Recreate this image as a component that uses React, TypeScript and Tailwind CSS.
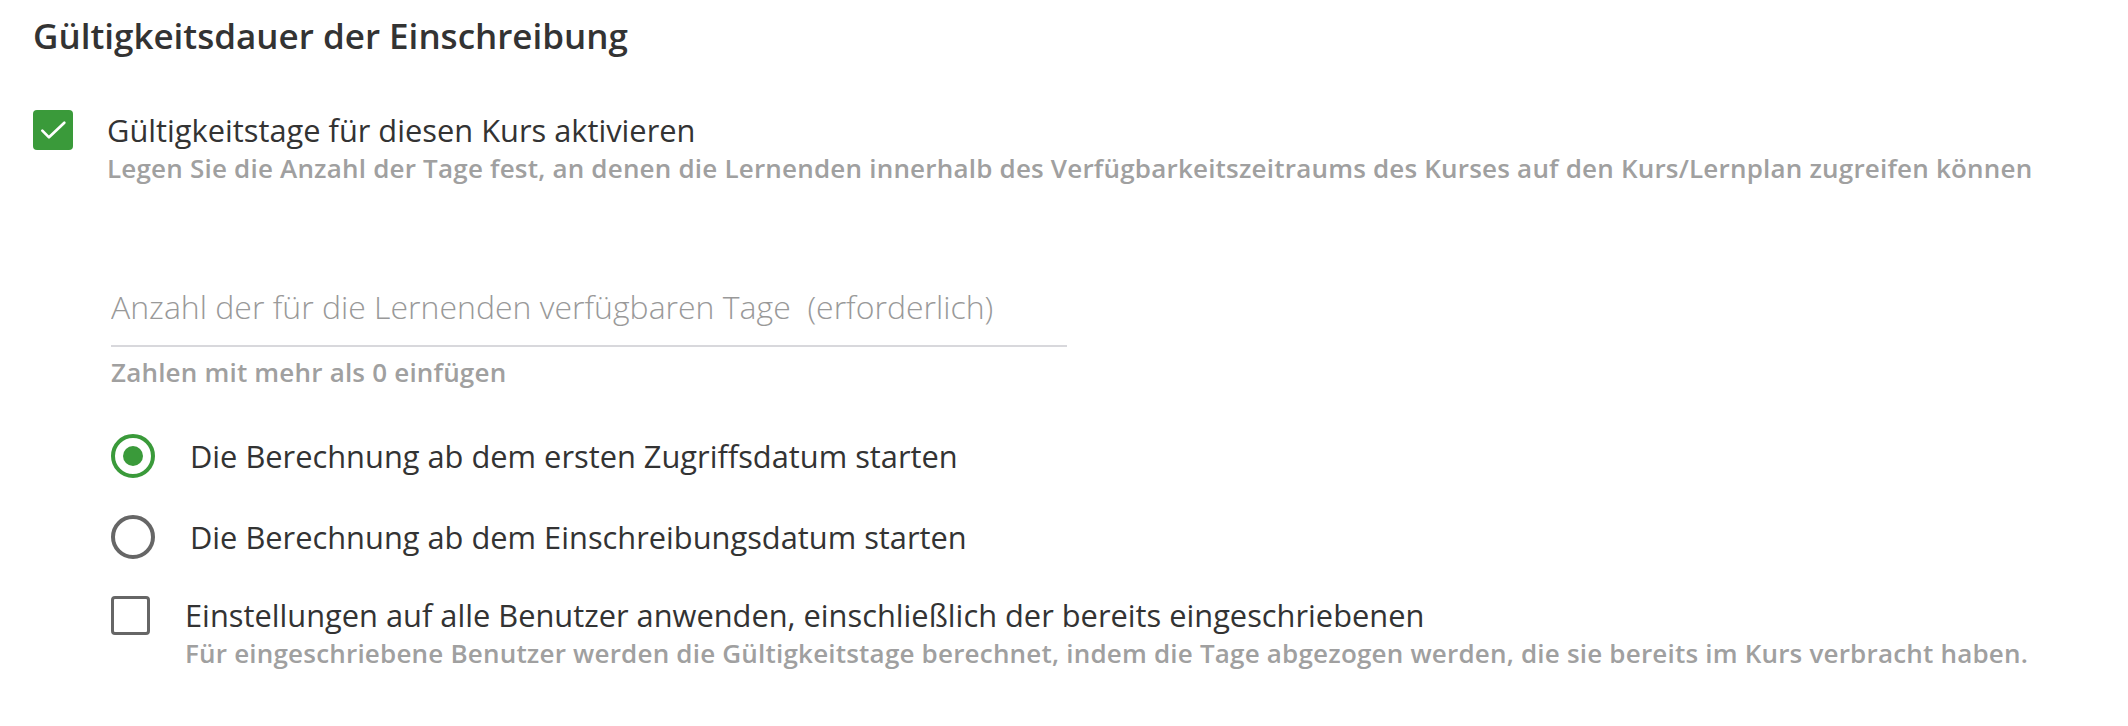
import { useState } from 'react';

const font = { fontFamily: '"Open Sans", "Noto Sans", sans-serif' };

function CheckIcon() {
  return (
    <svg viewBox="0 0 24 24" className="w-[32px] h-[32px]" fill="none" stroke="white" strokeWidth={2} strokeLinecap="round" strokeLinejoin="round">
      <path d="M4 12.5l5 5L20.5 6.5" />
    </svg>
  );
}

function Radio({ checked, label, onClick }: { checked: boolean; label: string; onClick: () => void }) {
  return (
    <button onClick={onClick} className="flex items-center gap-[35px] text-left">
      <span
        className={`w-[44px] h-[44px] rounded-full border-[4px] flex items-center justify-center ${
          checked ? 'border-[#3a9a3a]' : 'border-[#666666]'
        }`}
      >
        {checked && <span className="w-[20px] h-[20px] rounded-full bg-[#3a9a3a]" />}
      </span>
      <span className="text-[30.8px] text-[#333333] leading-[44px]">{label}</span>
    </button>
  );
}

export default function App() {
  const [enabled, setEnabled] = useState(true);
  const [startFrom, setStartFrom] = useState<'access' | 'enrollment'>('access');
  const [applyAll, setApplyAll] = useState(false);

  return (
    <div className="w-[2128px] h-[726px] bg-white pl-[33px] pt-[14px]" style={font}>
      <h2 className="text-[35px] font-semibold text-[#333333] leading-[44px]">Gültigkeitsdauer der Einschreibung</h2>

      <div className="flex items-start mt-[52px]">
        <button
          onClick={() => setEnabled(!enabled)}
          className={`w-[40px] h-[40px] rounded-[4px] flex items-center justify-center shrink-0 ${
            enabled ? 'bg-[#3a9a3a]' : 'border-[3px] border-[#666666]'
          }`}
        >
          {enabled && <CheckIcon />}
        </button>
        <div className="ml-[34px]">
          <div className="text-[30.8px] text-[#333333] leading-[40px]">Gültigkeitstage für diesen Kurs aktivieren</div>
          <div className="text-[26px] font-semibold text-[#a0a0a0] leading-[36px] tracking-[0.2px]">
            Legen Sie die Anzahl der Tage fest, an denen die Lernenden innerhalb des Verfügbarkeitszeitraums des Kurses auf den Kurs/Lernplan zugreifen können
          </div>
        </div>
      </div>

      <div className="ml-[78px] mt-[99px]">
        <div className="w-[956px] border-b-2 border-[#d8d8dc] pb-[16px]">
          <input
            className="w-full text-[32px] font-light text-[#333333] placeholder:text-[#999999] outline-none leading-[44px] h-[44px]"
            placeholder="Anzahl der für die Lernenden verfügbaren Tage  (erforderlich)"
          />
        </div>
        <div className="text-[26px] font-semibold text-[#a0a0a0] leading-[36px] mt-[7px] tracking-[0.2px]">Zahlen mit mehr als 0 einfügen</div>

        <div className="flex flex-col gap-[37px] mt-[44px]">
          <Radio checked={startFrom === 'access'} label="Die Berechnung ab dem ersten Zugriffsdatum starten" onClick={() => setStartFrom('access')} />
          <Radio checked={startFrom === 'enrollment'} label="Die Berechnung ab dem Einschreibungsdatum starten" onClick={() => setStartFrom('enrollment')} />
        </div>

        <div className="flex items-start mt-[36px]">
          <button
            onClick={() => setApplyAll(!applyAll)}
            className={`w-[39px] h-[39px] mt-[1px] rounded-[4px] flex items-center justify-center shrink-0 ${
              applyAll ? 'bg-[#3a9a3a]' : 'border-[3px] border-[#666666]'
            }`}
          >
            {applyAll && <CheckIcon />}
          </button>
          <div className="ml-[35px]">
            <div className="text-[30.8px] text-[#333333] leading-[40px]">
              Einstellungen auf alle Benutzer anwenden, einschließlich der bereits eingeschriebenen
            </div>
            <div className="text-[26px] font-semibold text-[#a0a0a0] leading-[36px] tracking-[0.2px]">
              Für eingeschriebene Benutzer werden die Gültigkeitstage berechnet, indem die Tage abgezogen werden, die sie bereits im Kurs verbracht haben.
            </div>
          </div>
        </div>
      </div>
    </div>
  );
}
